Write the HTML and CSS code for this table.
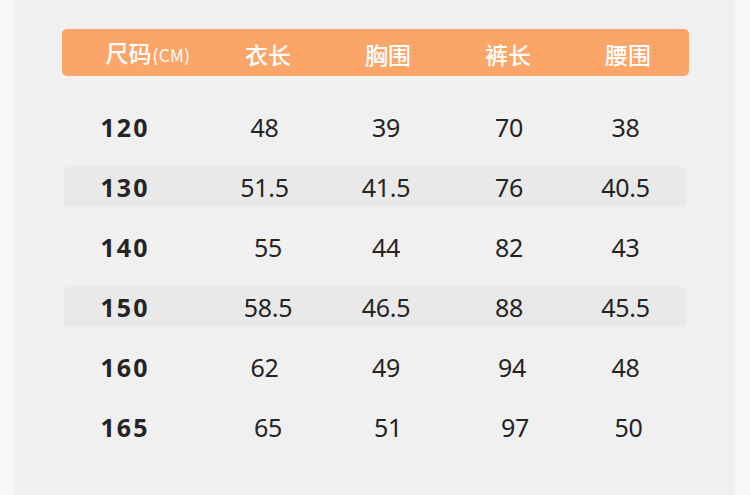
FILE: index.html
```html
<!DOCTYPE html>
<html lang="zh">
<head>
<meta charset="utf-8">
<title>尺码表</title>
<link rel="stylesheet" href="styles.css">
</head>
<body>
<div class="panel">
  <div class="head">
    <div class="hcell">尺码<span class="unit">(CM)</span></div>
    <div class="hcell">衣长</div>
    <div class="hcell">胸围</div>
    <div class="hcell">裤长</div>
    <div class="hcell">腰围</div>
  </div>
  <div class="rows">
    <div class="row">
      <div class="size">120</div><div class="c2 l">48</div><div class="c3">39</div><div class="c4">70</div><div class="c5">38</div>
    </div>
    <div class="row alt">
      <div class="size">130</div><div class="c2 l">51.5</div><div class="c3">41.5</div><div class="c4">76</div><div class="c5">40.5</div>
    </div>
    <div class="row">
      <div class="size">140</div><div class="c2">55</div><div class="c3">44</div><div class="c4">82</div><div class="c5">43</div>
    </div>
    <div class="row alt">
      <div class="size">150</div><div class="c2">58.5</div><div class="c3">46.5</div><div class="c4">88</div><div class="c5">45.5</div>
    </div>
    <div class="row">
      <div class="size">160</div><div class="c2 l">62</div><div class="c3">49</div><div class="c4 r1">94</div><div class="c5">48</div>
    </div>
    <div class="row">
      <div class="size">165</div><div class="c2">65</div><div class="c3 r">51</div><div class="c4 r2">97</div><div class="c5 r">50</div>
    </div>
  </div>
</div>
</body>
</html>
```
FILE: styles.css
```css
html, body {
  margin: 0;
  padding: 0;
}
body {
  background: #f7f7f7;
  font-family: "Noto Sans", "Noto Sans CJK SC", sans-serif;
  color: #242424;
}
.panel {
  margin: 0 15px;
  height: 495px;
  background: #f0f0f0;
  padding-top: 29px;
  box-sizing: border-box;
}
.head {
  margin-left: 47px;
  width: 627px;
  height: 47px;
  box-sizing: border-box;
  padding-left: 26px;
  background: #fba668;
  border-radius: 5px;
  display: grid;
  grid-template-columns: repeat(5, 120px);
  align-items: center;
}
.hcell {
  text-align: center;
  color: #fff;
  font-family: "Noto Sans CJK SC", sans-serif;
  font-size: 23px;
  font-weight: 500;
  line-height: 46px;
  white-space: nowrap;
}
.unit {
  font-size: 17px;
  font-weight: 400;
  letter-spacing: 0.5px;
  margin-left: 1px;
}
.rows {
  margin-top: 31px;
  margin-left: 49px;
  width: 622px;
  display: flex;
  flex-direction: column;
  gap: 20px;
}
.row {
  height: 40px;
  box-sizing: border-box;
  padding-left: 24px;
  display: grid;
  grid-template-columns: repeat(5, 120px);
  align-items: center;
  font-size: 25px;
  line-height: 40px;
  letter-spacing: -0.3px;
  border-radius: 3px;
}
.row.alt {
  background: #e9e9e9;
}
.row > div {
  text-align: center;
  white-space: nowrap;
}
.size {
  font-weight: 700;
  letter-spacing: 2px;
  padding-right: 46px;
}
.c2 { padding-left: 0; }
.c2.l { padding-right: 7px; }
.c3 { padding-right: 4px; }
.c3.r { padding-right: 0; }
.c4 { padding-left: 2px; }
.c4.r1 { padding-left: 8px; }
.c4.r2 { padding-left: 14px; }
.c5 { padding-right: 5px; }
.c5.r { padding-right: 0; padding-left: 1px; }
```
